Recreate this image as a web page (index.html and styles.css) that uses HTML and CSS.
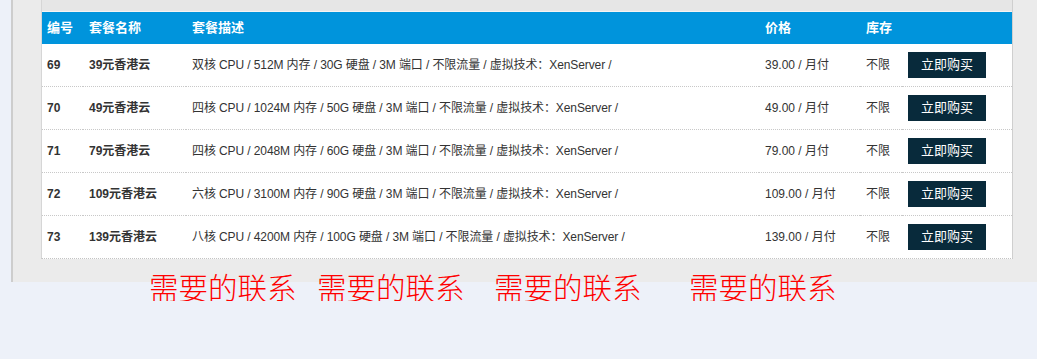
FILE: index.html
```html
<!DOCTYPE html>
<html lang="zh-CN">
<head>
<meta charset="utf-8">
<title>香港云套餐</title>
<link rel="stylesheet" href="styles.css">
</head>
<body>
<div class="panel">
  <div class="board">
    <div class="board-top"><h2 class="title">pay</h2></div>
    <table class="plans">
      <colgroup>
        <col class="c-id"><col class="c-name"><col class="c-desc"><col class="c-price"><col class="c-stock"><col class="c-buy">
      </colgroup>
      <thead>
        <tr><th>编号</th><th>套餐名称</th><th>套餐描述</th><th>价格</th><th>库存</th><th></th></tr>
      </thead>
      <tbody>
        <tr><td class="b">69</td><td class="b">39元香港云</td><td class="d">双核 CPU / 512M 内存 / 30G 硬盘 / 3M 端口 / 不限流量 / 虚拟技术：XenServer /</td><td>39.00 / 月付</td><td>不限</td><td><a class="buy" href="#">立即购买</a></td></tr>
        <tr><td class="b">70</td><td class="b">49元香港云</td><td class="d">四核 CPU / 1024M 内存 / 50G 硬盘 / 3M 端口 / 不限流量 / 虚拟技术：XenServer /</td><td>49.00 / 月付</td><td>不限</td><td><a class="buy" href="#">立即购买</a></td></tr>
        <tr><td class="b">71</td><td class="b">79元香港云</td><td class="d">四核 CPU / 2048M 内存 / 60G 硬盘 / 3M 端口 / 不限流量 / 虚拟技术：XenServer /</td><td>79.00 / 月付</td><td>不限</td><td><a class="buy" href="#">立即购买</a></td></tr>
        <tr><td class="b">72</td><td class="b">109元香港云</td><td class="d">六核 CPU / 3100M 内存 / 90G 硬盘 / 3M 端口 / 不限流量 / 虚拟技术：XenServer /</td><td>109.00 / 月付</td><td>不限</td><td><a class="buy" href="#">立即购买</a></td></tr>
        <tr><td class="b">73</td><td class="b">139元香港云</td><td class="d">八核 CPU / 4200M 内存 / 100G 硬盘 / 3M 端口 / 不限流量 / 虚拟技术：XenServer /</td><td>139.00 / 月付</td><td>不限</td><td><a class="buy" href="#">立即购买</a></td></tr>
      </tbody>
    </table>
  </div>
</div>
<p class="contacts"><span class="k1">需要的联系</span><span class="k2">需要的联系</span><span class="k3">需要的联系</span><span class="k4">需要的联系</span></p>
</body>
</html>
```
FILE: styles.css
```css
html, body {
  margin: 0;
  padding: 0;
  background: #edf1f9;
  font-family: "Liberation Sans", "Noto Sans CJK SC", sans-serif;
}

.panel {
  margin-left: 11px;
  border-left: 2px solid #cdcdcd;
  background: #ebebeb;
  padding: 0 0 23px 28px;
}

.board {
  width: 972px;
  box-sizing: border-box;
  border-left: 1px solid #d6d6d6;
  border-right: 1px solid #cfcfcf;
  border-bottom: 1px dotted #c4c4c4;
  background: #fff;
}

.board-top {
  height: 11px;
  background: #e6e6e6;
  border-bottom: 1px solid #f4f4f4;
  overflow: hidden;
  text-align: center;
}

.title {
  margin: -28px 0 0 0;
  padding-left: 24px;
  font: 24px/30px "Liberation Sans", sans-serif;
  color: #f00;
}

.plans {
  width: 970px;
  border-collapse: collapse;
  table-layout: fixed;
  font-size: 12px;
  color: #333;
}

.c-id { width: 41px; }
.c-name { width: 103px; }
.c-desc { width: 573px; }
.c-price { width: 101px; }
.c-stock { width: 42px; }
.c-buy { width: 110px; }

.plans th {
  height: 32px;
  padding: 0 0 0 5px;
  background: #0094dc;
  color: #fff;
  font: bold 13px/32px "Liberation Sans", "Noto Sans CJK SC", sans-serif;
  text-align: left;
}

.plans th + th,
.plans td + td {
  padding-left: 6px;
}

.plans td {
  height: 42px;
  padding: 0 0 0 5px;
  border-bottom: 1px dotted #c8c8c8;
  white-space: nowrap;
  line-height: 16px;
}

.plans tbody tr:last-child td {
  border-bottom: none;
}

.plans td.b {
  font-weight: bold;
}

.plans td.d {
  letter-spacing: -0.1px;
}

.buy {
  display: inline-block;
  width: 78px;
  height: 26px;
  line-height: 26px;
  text-align: center;
  background: #082a3b;
  color: #fff;
  font-size: 13px;
  text-decoration: none;
}

.contacts {
  position: relative;
  margin: -10px 0 0 0;
  padding-left: 149px;
  font-family: "Noto Sans CJK SC", sans-serif;
  font-weight: 300;
  font-size: 29.5px;
  line-height: 29px;
  color: #f00;
  white-space: nowrap;
}

.k2 { margin-left: 20.5px; }
.k3 { margin-left: 29.5px; }
.k4 { margin-left: 47.5px; }
```
